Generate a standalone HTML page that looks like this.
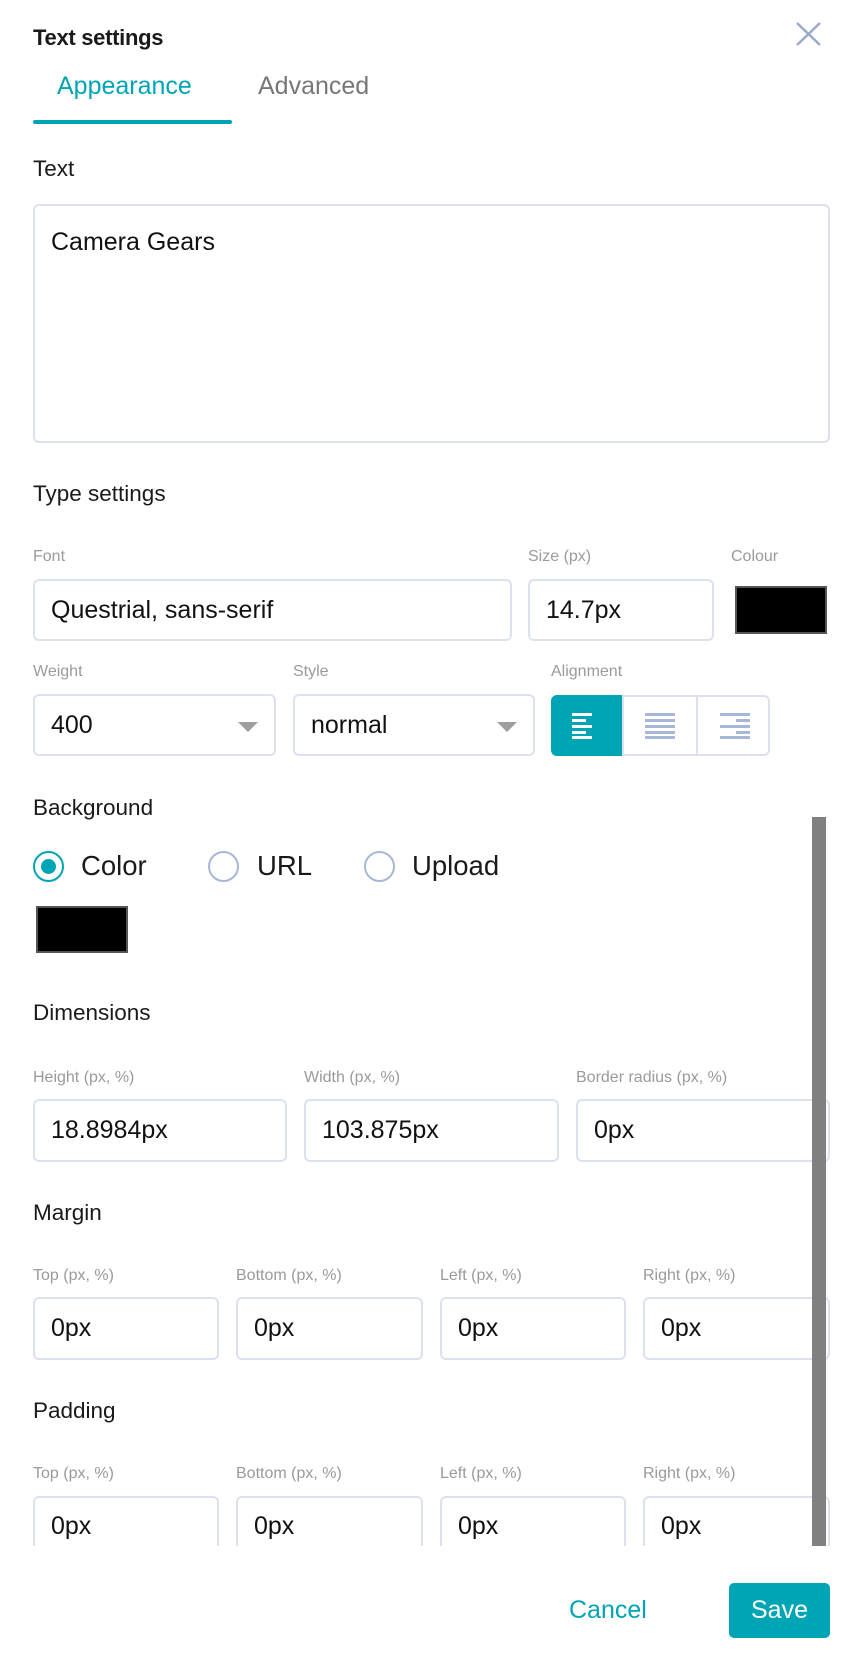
<!DOCTYPE html>
<html><head><meta charset="utf-8"><style>
*{box-sizing:border-box;margin:0;padding:0}
body{width:856px;height:1657px;background:#fff;font-family:"Liberation Sans",sans-serif;color:#1a1a1a;position:relative;overflow:hidden}
.a{position:absolute;white-space:nowrap}
.h{font-size:22.5px;color:#1a1a1a}
.l{font-size:16px;color:#9a9a9a}
.in{position:absolute;border:2px solid #dde1ef;border-radius:6px;background:#fff;font-size:25px;color:#111;padding-left:16px;display:flex;align-items:center}
.arr{position:absolute;right:16px;top:26px;width:0;height:0;border-left:10px solid transparent;border-right:10px solid transparent;border-top:10px solid #9e9e9e}
.rad{position:absolute;width:31px;height:31px;border:2px solid #a8b7d8;border-radius:50%}
</style></head><body>
<div class="a" style="left:33px;top:25px;font-size:22px;font-weight:bold;letter-spacing:-0.3px">Text settings</div>
<svg class="a" style="left:795px;top:22px" width="27" height="24" viewBox="0 0 27 24"><path d="M2 1L25 23M25 1L2 23" stroke="#9aa9cc" stroke-width="2.5" fill="none"/></svg>
<div class="a" style="left:57px;top:72px;font-size:25px;color:#00a5b5">Appearance</div>
<div class="a" style="left:258px;top:72px;font-size:25px;color:#777">Advanced</div>
<div class="a" style="left:33px;top:120px;width:199px;height:4px;background:#00a5b5;border-radius:2px"></div>
<div class="a h" style="left:33px;top:156px">Text</div>
<div class="in" style="left:33px;top:204px;width:797px;height:239px;align-items:flex-start;padding-top:22px">Camera Gears</div>
<div class="a h" style="left:33px;top:481px">Type settings</div>
<div class="a l" style="left:33px;top:548px">Font</div>
<div class="a l" style="left:528px;top:548px">Size (px)</div>
<div class="a l" style="left:731px;top:548px">Colour</div>
<div class="in" style="left:33px;top:579px;width:479px;height:62px">Questrial, sans-serif</div>
<div class="in" style="left:528px;top:579px;width:186px;height:62px">14.7px</div>
<div class="a" style="left:735px;top:586px;width:92px;height:48px;background:#000;border:2px solid #555"></div>
<div class="a l" style="left:33px;top:663px">Weight</div>
<div class="a l" style="left:293px;top:663px">Style</div>
<div class="a l" style="left:551px;top:663px">Alignment</div>
<div class="in" style="left:33px;top:694px;width:243px;height:62px">400<div class="arr"></div></div>
<div class="in" style="left:293px;top:694px;width:242px;height:62px">normal<div class="arr"></div></div>
<div class="a" style="left:551px;top:695px;width:219px;height:61px;border:2px solid #dde1ef;border-radius:6px"></div>
<div class="a" style="left:551px;top:695px;width:71px;height:61px;background:#00a5b5;border-radius:6px 0 0 6px"></div>
<div class="a" style="left:622px;top:697px;width:2px;height:57px;background:#dde1ef"></div>
<div class="a" style="left:696px;top:697px;width:2px;height:57px;background:#dde1ef"></div>
<svg class="a" style="left:572px;top:713px" width="30" height="26"><g fill="#fff"><rect x="0" y="0" width="20" height="3"/><rect x="0" y="6" width="14" height="3"/><rect x="0" y="12" width="20" height="3"/><rect x="0" y="18" width="14" height="3"/><rect x="0" y="23" width="20" height="3"/></g></svg>
<svg class="a" style="left:645px;top:713px" width="30" height="26"><g fill="#a8b7d8"><rect x="0" y="0" width="30" height="3"/><rect x="0" y="6" width="30" height="3"/><rect x="0" y="12" width="30" height="3"/><rect x="0" y="18" width="30" height="3"/><rect x="0" y="23" width="30" height="3"/></g></svg>
<svg class="a" style="left:720px;top:713px" width="30" height="26"><g fill="#a8b7d8"><rect x="0" y="0" width="30" height="3"/><rect x="16" y="6" width="14" height="3"/><rect x="0" y="12" width="30" height="3"/><rect x="16" y="18" width="14" height="3"/><rect x="0" y="23" width="30" height="3"/></g></svg>
<div class="a h" style="left:33px;top:795px">Background</div>
<div class="rad" style="left:33px;top:851px;border-color:#00a5b5"><div style="position:absolute;left:6px;top:6px;width:15px;height:15px;border-radius:50%;background:#00a5b5"></div></div>
<div class="a" style="left:81px;top:850px;font-size:27.5px">Color</div>
<div class="rad" style="left:208px;top:851px"></div>
<div class="a" style="left:257px;top:850px;font-size:27.5px">URL</div>
<div class="rad" style="left:364px;top:851px"></div>
<div class="a" style="left:412px;top:850px;font-size:27.5px">Upload</div>
<div class="a" style="left:36px;top:906px;width:92px;height:47px;background:#000;border:2px solid #555"></div>
<div class="a h" style="left:33px;top:1000px">Dimensions</div>
<div class="a l" style="left:33px;top:1069px">Height (px, %)</div>
<div class="a l" style="left:304px;top:1069px">Width (px, %)</div>
<div class="a l" style="left:576px;top:1069px">Border radius (px, %)</div>
<div class="in" style="left:33px;top:1099px;width:254px;height:63px">18.8984px</div>
<div class="in" style="left:304px;top:1099px;width:255px;height:63px">103.875px</div>
<div class="in" style="left:576px;top:1099px;width:254px;height:63px">0px</div>
<div class="a h" style="left:33px;top:1200px">Margin</div>
<div class="a l" style="left:33px;top:1267px">Top (px, %)</div>
<div class="a l" style="left:236px;top:1267px">Bottom (px, %)</div>
<div class="a l" style="left:440px;top:1267px">Left (px, %)</div>
<div class="a l" style="left:643px;top:1267px">Right (px, %)</div>
<div class="in" style="left:33px;top:1297px;width:186px;height:63px">0px</div>
<div class="in" style="left:236px;top:1297px;width:187px;height:63px">0px</div>
<div class="in" style="left:440px;top:1297px;width:186px;height:63px">0px</div>
<div class="in" style="left:643px;top:1297px;width:187px;height:63px">0px</div>
<div class="a h" style="left:33px;top:1398px">Padding</div>
<div class="a l" style="left:33px;top:1465px">Top (px, %)</div>
<div class="a l" style="left:236px;top:1465px">Bottom (px, %)</div>
<div class="a l" style="left:440px;top:1465px">Left (px, %)</div>
<div class="a l" style="left:643px;top:1465px">Right (px, %)</div>
<div class="a" style="left:0;top:1496px;width:856px;height:50px;overflow:hidden">
<div class="in" style="left:33px;top:0;width:186px;height:63px;align-items:flex-start;padding-top:14px">0px</div>
<div class="in" style="left:236px;top:0;width:187px;height:63px;align-items:flex-start;padding-top:14px">0px</div>
<div class="in" style="left:440px;top:0;width:186px;height:63px;align-items:flex-start;padding-top:14px">0px</div>
<div class="in" style="left:643px;top:0;width:187px;height:63px;align-items:flex-start;padding-top:14px">0px</div>
</div>
<div class="a" style="left:812px;top:817px;width:14px;height:729px;background:#808080"></div>
<div class="a" style="left:569px;top:1596px;font-size:25px;color:#00a5b5">Cancel</div>
<div class="a" style="left:729px;top:1583px;width:101px;height:55px;background:#00a5b5;border-radius:5px;color:#fff;font-size:25px;display:flex;align-items:center;justify-content:center">Save</div>
</body></html>
